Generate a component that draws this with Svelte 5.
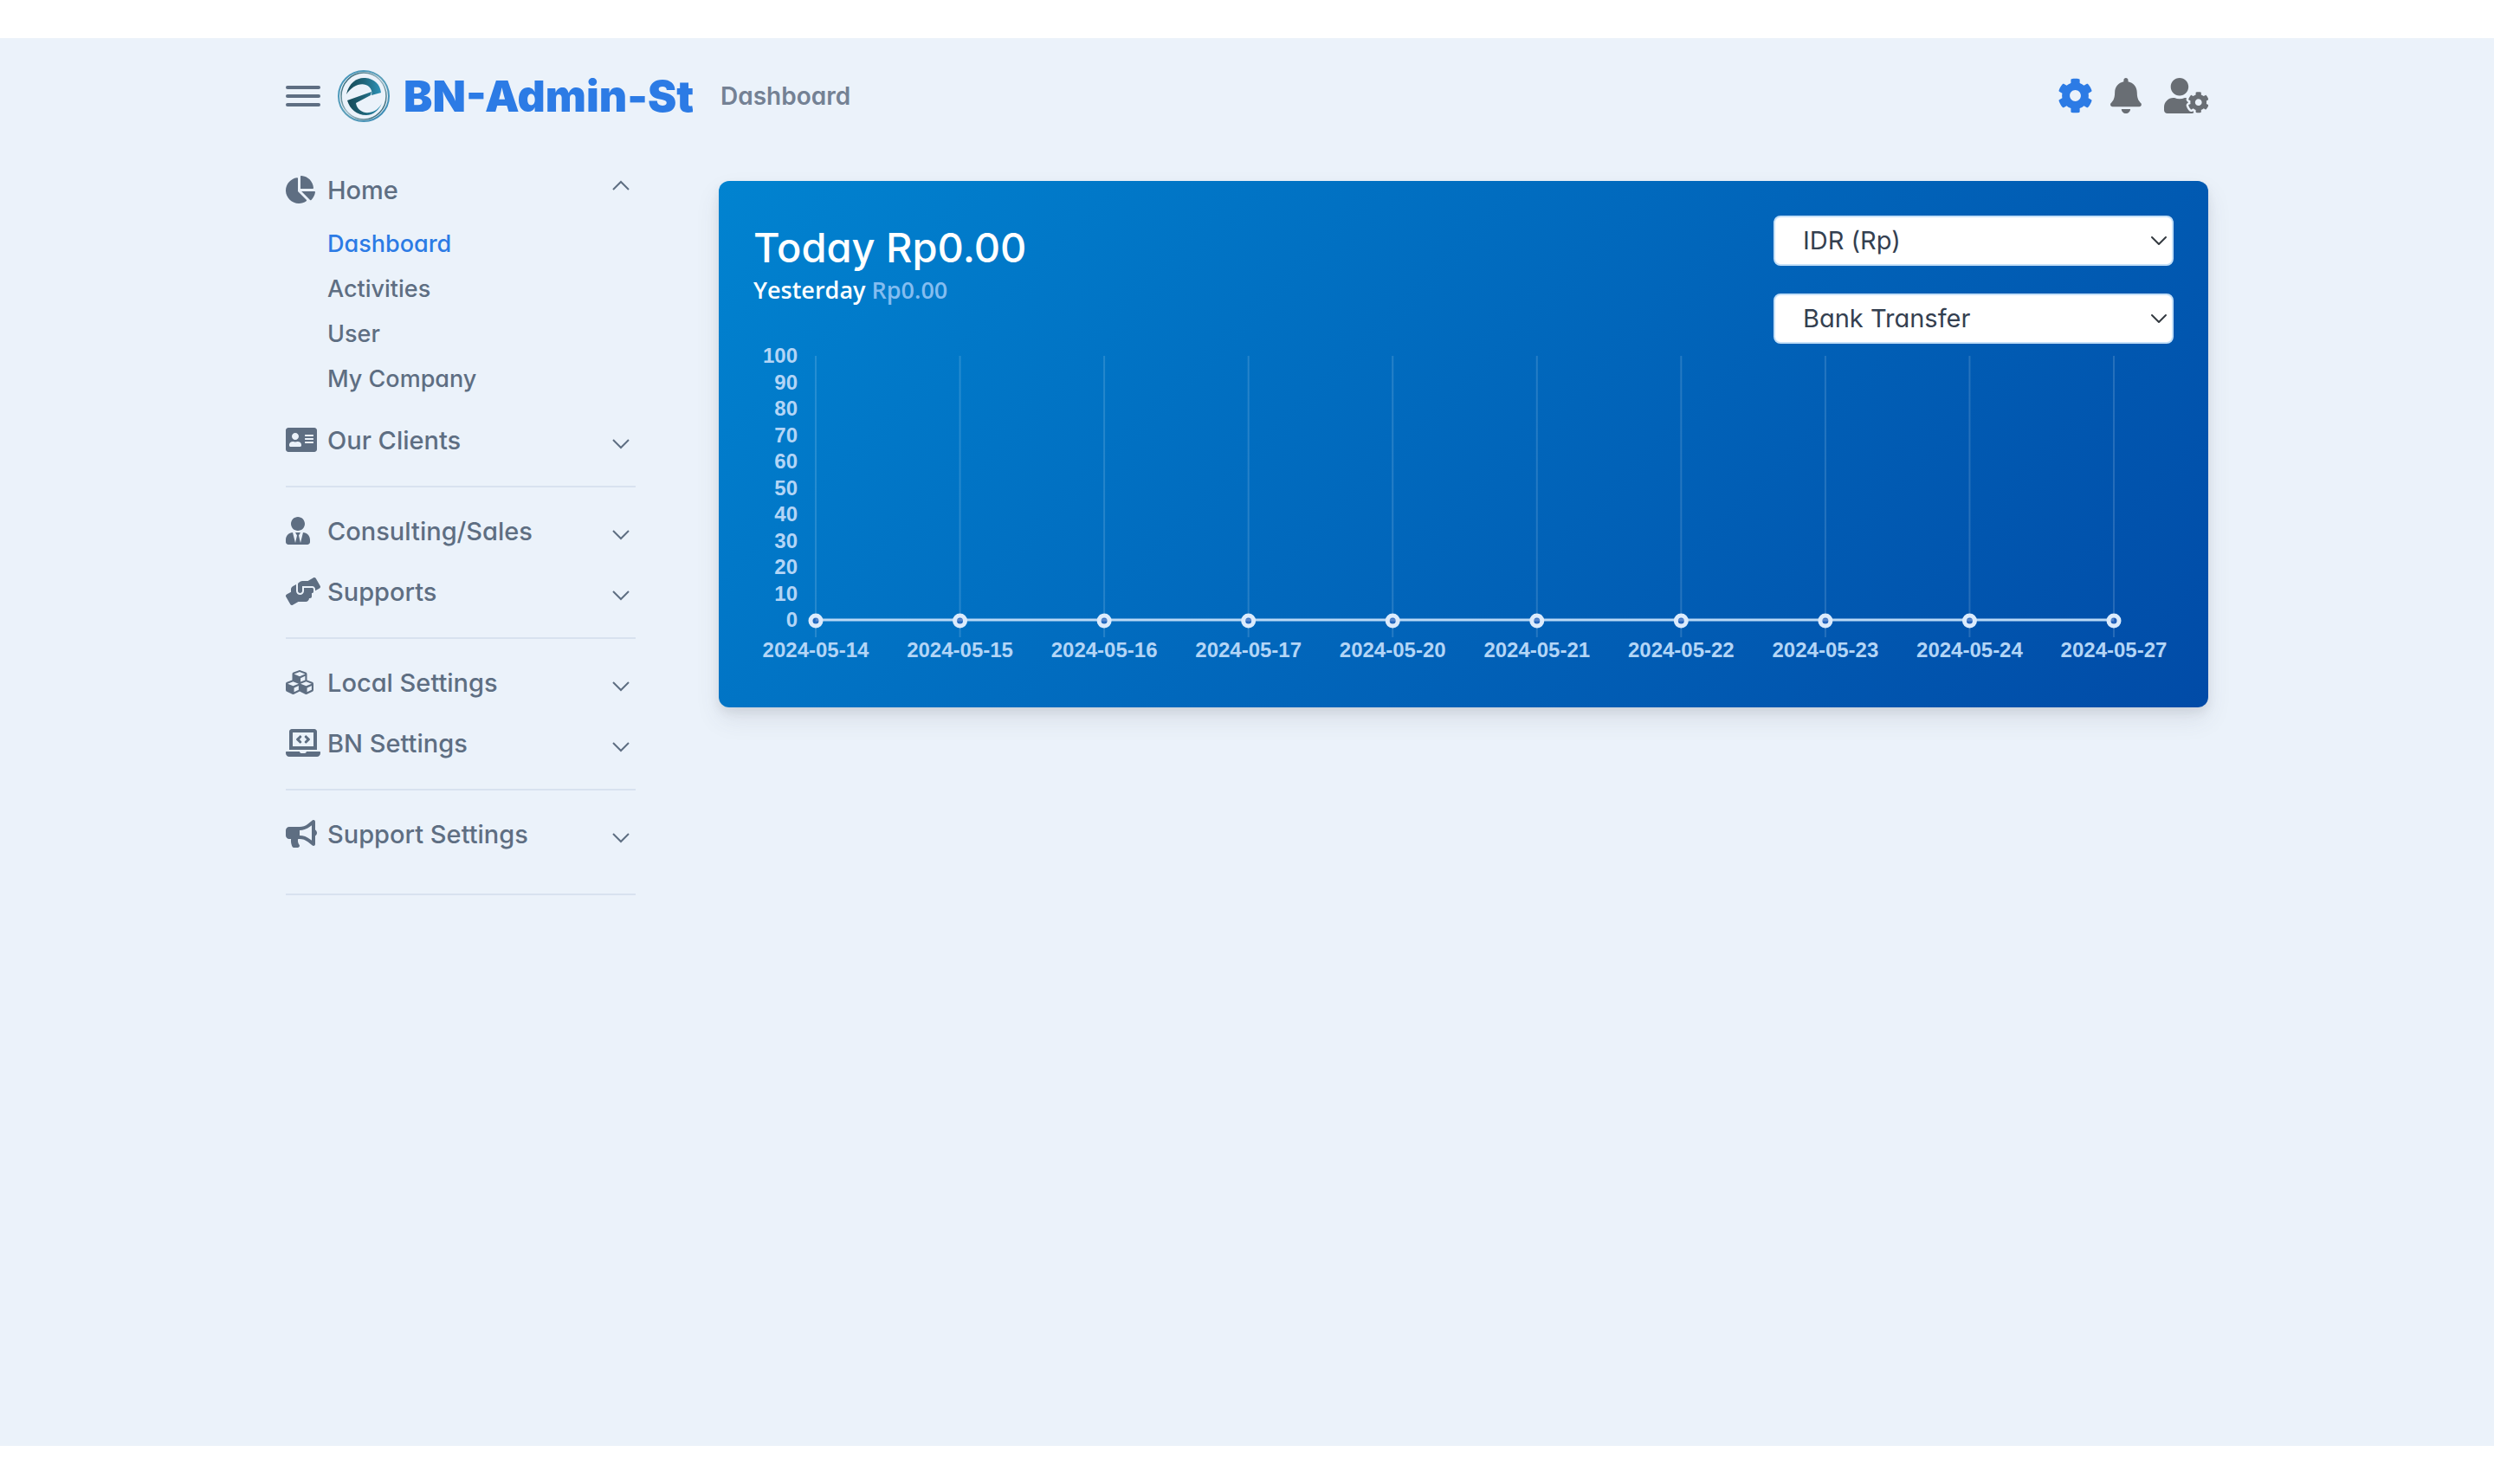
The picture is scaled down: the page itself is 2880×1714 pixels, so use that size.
<script>
  const icons = {
    pie: { w: 544, d: 'M527.79 288H290.5l158.03 158.03c6.04 6.04 15.98 6.53 22.19.68 38.7-36.46 65.32-85.61 73.13-140.86 1.34-9.46-6.51-17.85-16.06-17.85zm-15.83-64.8C503.72 103.74 408.26 8.28 288.8.04 279.68-.59 272 7.1 272 16.24V240h223.77c9.14 0 16.82-7.68 16.19-16.8zM224 288V50.71c0-9.55-8.39-17.4-17.84-16.06C86.99 51.49-4.1 155.6.14 280.37 4.5 408.51 114.83 513.59 243.03 511.98c50.4-.63 96.97-16.87 135.26-44.03 7.9-5.6 8.42-17.23 1.57-24.08L224 288z' },
    card: { w: 576, d: 'M528 32H48C21.5 32 0 53.5 0 80v352c0 26.5 21.5 48 48 48h480c26.5 0 48-21.5 48-48V80c0-26.5-21.5-48-48-48zm-352 96c35.3 0 64 28.7 64 64s-28.7 64-64 64-64-28.7-64-64 28.7-64 64-64zm112 236.8c0 10.6-10 19.2-22.4 19.2H86.4C74 384 64 375.4 64 364.8v-19.2c0-31.8 30.1-57.6 67.2-57.6h5c12.3 5.1 25.7 8 39.8 8s27.6-2.9 39.8-8h5c37.1 0 67.2 25.8 67.2 57.6v19.2zM512 312c0 4.4-3.6 8-8 8H360c-4.4 0-8-3.6-8-8v-16c0-4.4 3.6-8 8-8h144c4.4 0 8 3.6 8 8v16zm0-64c0 4.4-3.6 8-8 8H360c-4.4 0-8-3.6-8-8v-16c0-4.4 3.6-8 8-8h144c4.4 0 8 3.6 8 8v16zm0-64c0 4.4-3.6 8-8 8H360c-4.4 0-8-3.6-8-8v-16c0-4.4 3.6-8 8-8h144c4.4 0 8 3.6 8 8v16z' },
    tie: { w: 448, d: 'M224 256c70.7 0 128-57.3 128-128S294.7 0 224 0 96 57.3 96 128s57.3 128 128 128zm95.8 32.6L272 480l-32-136 32-56h-96l32 56-32 136-47.8-191.4C56.9 292 0 350.3 0 422.4V464c0 26.5 21.5 48 48 48h352c26.5 0 48-21.5 48-48v-41.6c0-72.1-56.9-130.4-128.2-133.8z' },
    hands: { w: 640, d: 'M488 192H336v56c0 39.7-32.3 72-72 72s-72-32.3-72-72V126.4l-64.9 39C107.8 176.9 96 197.8 96 220.2v47.3l-80 46.2C.7 322.5-4.6 342.1 4.3 357.4l80 138.6c8.8 15.3 28.4 20.5 43.7 11.7L231.4 448H368c35.3 0 64-28.7 64-64h16c17.7 0 32-14.3 32-32v-64h8c13.3 0 24-10.7 24-24v-48c0-13.3-10.7-24-24-24zm147.7-37.4L555.7 16C546.9.7 527.3-4.5 512 4.3L408.6 64H306.4c-12 0-23.7 3.4-33.9 9.7L239 94.6c-9.4 5.8-15 16.1-15 27.1V248c0 22.1 17.9 40 40 40s40-17.9 40-40v-88h184c30.9 0 56 25.1 56 56v28.5l80-46.2c15.3-8.9 20.5-28.4 11.7-43.7z' },
    cubes: { w: 512, d: 'M488.6 250.2L392 214V105.5c0-15-9.3-28.4-23.4-33.7l-100-37.5c-8.1-3.1-17.1-3.1-25.3 0l-100 37.5c-14.1 5.3-23.4 18.7-23.4 33.7V214l-96.6 36.2C9.3 255.5 0 268.9 0 283.9V394c0 13.6 7.7 26.1 19.9 32.2l100 50c10.1 5.1 22.1 5.1 32.2 0l103.9-52 103.9 52c10.1 5.1 22.1 5.1 32.2 0l100-50c12.2-6.1 19.9-18.6 19.9-32.2V283.9c0-15-9.3-28.4-23.4-33.7zM358 214.8l-85 31.9v-68.2l85-37v73.3zM154 104.1l102-38.2 102 38.2v.6l-102 41.4-102-41.4v-.6zm84 291.1l-85 42.5v-79.1l85-38.8v75.4zm0-112l-102 41.4-102-41.4v-.6l102-38.2 102 38.2v.6zm240 112l-85 42.5v-79.1l85-38.8v75.4zm0-112l-102 41.4-102-41.4v-.6l102-38.2 102 38.2v.6z' },
    laptop: { w: 640, d: 'M255.03 261.65c6.25 6.25 16.38 6.25 22.63 0l11.31-11.31c6.25-6.25 6.25-16.38 0-22.63L253.25 192l35.71-35.72c6.25-6.25 6.25-16.38 0-22.63l-11.31-11.31c-6.25-6.25-16.38-6.25-22.63 0l-58.34 58.34c-6.25 6.25-6.25 16.38 0 22.63l58.35 58.34zm96.01-11.3l11.31 11.31c6.25 6.25 16.38 6.25 22.63 0l58.34-58.34c6.25-6.25 6.25-16.38 0-22.63l-58.34-58.34c-6.25-6.25-16.38-6.25-22.63 0l-11.31 11.31c-6.25 6.25-6.25 16.38 0 22.63L386.75 192l-35.71 35.72c-6.25 6.25-6.25 16.38 0 22.63zM624 416H381.54c-.74 19.81-14.71 32-32.74 32H288c-18.69 0-33.02-17.47-32.77-32H16c-8.8 0-16 7.2-16 16v16c0 35.2 28.8 64 64 64h512c35.2 0 64-28.8 64-64v-16c0-8.8-7.2-16-16-16zM576 48c0-26.4-21.6-48-48-48H112C85.6 0 64 21.6 64 48v336h512V48zm-64 272H128V64h384v256z' },
    horn: { w: 576, d: 'M576 240c0-23.63-12.95-44.04-32-55.12V32.01C544 23.26 537.02 0 512 0c-7.12 0-14.19 2.38-19.98 7.02l-85.03 68.03C364.28 109.19 310.66 128 256 128H64c-35.35 0-64 28.65-64 64v96c0 35.35 28.65 64 64 64h33.7c-1.39 10.48-2.18 21.14-2.18 32 0 39.77 9.26 77.35 25.56 110.94 5.19 10.69 16.52 17.06 28.4 17.06h74.28c26.05 0 41.69-29.84 25.9-50.56-16.4-21.52-26.15-48.36-26.15-77.44 0-11.11 1.62-21.79 4.41-32H256c54.66 0 108.28 18.81 150.98 52.95l85.03 68.03a32.023 32.023 0 0 0 19.98 7.02c24.92 0 32-22.78 32-32V295.13C563.05 284.04 576 263.63 576 240zm-96 141.42l-33.05-26.44C392.95 311.78 325.12 288 256 288v-96c69.12 0 136.95-23.78 190.95-66.98L480 98.58v282.84z' },
    cog: { w: 512, d: 'M487.4 315.7l-42.6-24.6c4.3-23.2 4.3-47 0-70.2l42.6-24.6c4.9-2.8 7.1-8.6 5.5-14-11.1-35.6-30-67.8-54.7-94.6-3.8-4.1-10-5.1-14.8-2.3L380.8 110c-17.9-15.4-38.5-27.3-60.8-35.1V25.8c0-5.6-3.9-10.5-9.4-11.7-36.7-8.2-74.3-7.8-109.2 0-5.5 1.2-9.4 6.1-9.4 11.7V75c-22.2 7.9-42.8 19.8-60.8 35.1L88.7 85.5c-4.9-2.8-11-1.9-14.8 2.3-24.7 26.7-43.6 58.9-54.7 94.6-1.7 5.4.6 11.2 5.5 14L67.3 221c-4.3 23.2-4.3 47 0 70.2l-42.6 24.6c-4.9 2.8-7.1 8.6-5.5 14 11.1 35.6 30 67.8 54.7 94.6 3.8 4.1 10 5.1 14.8 2.3l42.6-24.6c17.9 15.4 38.5 27.3 60.8 35.1v49.2c0 5.6 3.9 10.5 9.4 11.7 36.7 8.2 74.3 7.8 109.2 0 5.5-1.2 9.4-6.1 9.4-11.7v-49.2c22.2-7.9 42.8-19.8 60.8-35.1l42.6 24.6c4.9 2.8 11 1.9 14.8-2.3 24.7-26.7 43.6-58.9 54.7-94.6 1.5-5.5-.7-11.3-5.6-14.1zM256 336c-44.1 0-80-35.9-80-80s35.9-80 80-80 80 35.9 80 80-35.9 80-80 80z' },
    bell: { w: 448, d: 'M224 512c35.32 0 63.97-28.65 63.97-64H160.03c0 35.35 28.65 64 63.97 64zm215.39-149.71c-19.32-20.76-55.47-51.99-55.47-154.29 0-77.7-54.48-139.9-127.94-155.16V32c0-17.67-14.32-32-31.98-32s-31.98 14.33-31.98 32v20.84C118.56 68.1 64.08 130.3 64.08 208c0 102.3-36.15 133.53-55.47 154.29-6 6.45-8.66 14.16-8.61 21.71.11 16.4 12.98 32 32.1 32h383.8c19.12 0 32-15.6 32.1-32 .05-7.55-2.61-15.27-8.61-21.71z' },
    userCog: { w: 640, d: 'M610.5 373.3c2.6-14.1 2.6-28.5 0-42.6l25.8-14.9c3-1.7 4.3-5.2 3.3-8.5-6.7-21.6-18.2-41.2-33.2-57.4-2.3-2.5-6-3.1-9-1.4l-25.8 14.9c-10.9-9.3-23.4-16.5-36.9-21.3v-29.8c0-3.4-2.4-6.4-5.7-7.1-22.3-5-45-4.8-66.2 0-3.3.7-5.7 3.7-5.7 7.1v29.8c-13.5 4.8-26 12-36.9 21.3l-25.8-14.9c-2.9-1.7-6.7-1.1-9 1.4-15 16.2-26.5 35.8-33.2 57.4-1 3.3.4 6.8 3.3 8.5l25.8 14.9c-2.6 14.1-2.6 28.5 0 42.6l-25.8 14.9c-3 1.7-4.3 5.2-3.3 8.5 6.7 21.6 18.2 41.1 33.2 57.4 2.3 2.5 6 3.1 9 1.4l25.8-14.9c10.9 9.3 23.4 16.5 36.9 21.3v29.8c0 3.4 2.4 6.4 5.7 7.1 22.3 5 45 4.8 66.2 0 3.3-.7 5.7-3.7 5.7-7.1v-29.8c13.5-4.8 26-12 36.9-21.3l25.8 14.9c2.9 1.7 6.7 1.1 9-1.4 15-16.2 26.5-35.8 33.2-57.4 1-3.3-.4-6.8-3.3-8.5l-25.8-14.9zM496 400.5c-26.8 0-48.5-21.8-48.5-48.5s21.8-48.5 48.5-48.5 48.5 21.8 48.5 48.5-21.7 48.5-48.5 48.5zM224 256c70.7 0 128-57.3 128-128S294.7 0 224 0 96 57.3 96 128s57.3 128 128 128zm201.2 226.5c-2.3-1.2-4.6-2.6-6.8-3.9l-7.9 4.6c-6 3.4-12.8 5.3-19.6 5.3-10.9 0-21.4-4.6-28.9-12.6-18.3-19.8-32.3-43.9-40.2-69.6-5.5-17.7 1.9-36.4 17.9-45.7l7.9-4.6c-.1-2.6-.1-5.2 0-7.8l-7.9-4.6c-16-9.2-23.4-28-17.9-45.7.9-2.9 2.2-5.8 3.2-8.7-3.8-.3-7.5-1.2-11.4-1.2h-16.7c-22.2 10.2-46.9 16-72.9 16s-50.6-5.8-72.9-16h-16.7C60.2 288 0 348.2 0 422.4V464c0 26.5 21.5 48 48 48h352c10.1 0 19.5-3.2 27.2-8.5-1.2-3.8-2-7.7-2-11.8v-9.2z' }
  };

  let groups = $state([
    [
      { label: 'Home', icon: 'pie', open: true, children: ['Dashboard', 'Activities', 'User', 'My Company'] },
      { label: 'Our Clients', icon: 'card' }
    ],
    [
      { label: 'Consulting/Sales', icon: 'tie' },
      { label: 'Supports', icon: 'hands' }
    ],
    [
      { label: 'Local Settings', icon: 'cubes' },
      { label: 'BN Settings', icon: 'laptop' }
    ],
    [{ label: 'Support Settings', icon: 'horn' }]
  ]);

  const filters = [
    { id: 'currency', name: 'Currency', options: ['IDR (Rp)', 'USD ($)'] },
    { id: 'method', name: 'Payment method', options: ['Bank Transfer', 'Credit Card'] }
  ];

  const dates = ['14', '15', '16', '17', '20', '21', '22', '23', '24', '27'];
  const points = dates.map((d, i) => ({ label: `2024-05-${d}`, x: 72 + (i * 1499) / 9 }));
  const ticks = Array.from({ length: 11 }, (_, i) => ({ value: 100 - i * 10, y: 14 + (i * 305) / 10 }));
</script>

{#snippet icon(name)}
  <svg class="icon" viewBox="0 0 {icons[name].w} 512" aria-hidden="true"><path d={icons[name].d} /></svg>
{/snippet}

<div class="page">
  <div class="container">
    <header>
      <div class="brand-area">
        <button class="burger" aria-label="Toggle navigation"><span></span><span></span><span></span></button>
        <a class="brand" href="#home">
          <svg class="logo" viewBox="0 0 60 60" aria-hidden="true">
            <defs>
              <linearGradient id="ring" x1="0" y1="0" x2="1" y2="1">
                <stop offset="0" stop-color="#3f93bb" />
                <stop offset="0.5" stop-color="#5c9fb8" />
                <stop offset="1" stop-color="#3387b5" />
              </linearGradient>
              <linearGradient id="ring-inner" x1="0" y1="0" x2="1" y2="1">
                <stop offset="0" stop-color="#17505f" />
                <stop offset="0.5" stop-color="#9db9c4" />
                <stop offset="1" stop-color="#17505f" />
              </linearGradient>
              <linearGradient id="swirl" x1="0" y1="0" x2="1" y2="0">
                <stop offset="0" stop-color="#174a58" />
                <stop offset="0.5" stop-color="#1f6478" />
                <stop offset="1" stop-color="#2d93b8" />
              </linearGradient>
            </defs>
            <circle cx="30" cy="30" r="29" fill="none" stroke="url(#ring)" stroke-width="2" />
            <ellipse cx="30" cy="30" rx="26" ry="27" fill="none" stroke="url(#ring-inner)" stroke-width="1.5" />
            <path d="M10 28C13 14 23 8 32 9c10 1 17 7 18 17l-11 3c1-4 0-7-3-10-7-6-19-2-26 9z" fill="url(#swirl)" />
            <path d="M11 35l28-10-1 4-17 9c1 8 9 12 15 11 7-1 12-5 15-11-3 8-10 14-18 14-11 0-19-7-22-17z" fill="url(#swirl)" />
          </svg>
          <span>BN-Admin-St</span>
        </a>
      </div>
      <h1>Dashboard</h1>
      <div class="actions">
        <button class="active" aria-label="Settings">{@render icon('cog')}</button>
        <button aria-label="Notifications">{@render icon('bell')}</button>
        <button aria-label="Account">{@render icon('userCog')}</button>
      </div>
    </header>

    <div class="body">
      <nav aria-label="Main">
        {#each groups as group}
          <ul class="group">
            {#each group as item}
              <li>
                <button class="row" aria-expanded={!!item.open} onclick={() => (item.open = !item.open)}>
                  <span class="slot">{@render icon(item.icon)}</span>
                  <span class="label">{item.label}</span>
                  <svg class="chevron" class:up={item.open} viewBox="0 0 20 28" aria-hidden="true"><path d="M1 14l9 9 9-9" /></svg>
                </button>
                {#if item.open && item.children}
                  <ul class="sub">
                    {#each item.children as child, i}
                      <li><a href="#{child}" class:current={i === 0}>{child}</a></li>
                    {/each}
                  </ul>
                {/if}
              </li>
            {/each}
          </ul>
        {/each}
      </nav>

      <main>
        <section class="card">
          <div class="head">
            <div>
              <h2>Today Rp0.00</h2>
              <p>Yesterday <span>Rp0.00</span></p>
            </div>
            <div class="filters">
              {#each filters as f}
                <div class="select">
                  <select id={f.id} aria-label={f.name}>
                    {#each f.options as o}<option>{o}</option>{/each}
                  </select>
                  <svg viewBox="0 0 20 20" aria-hidden="true"><path d="M2 6l8 8 8-8" /></svg>
                </div>
              {/each}
            </div>
          </div>
          <svg class="chart" viewBox="0 0 1640 380" role="img" aria-label="Payments per day">
            {#each ticks as t}
              <text class="y" x="51" y={t.y + 8}>{t.value}</text>
            {/each}
            {#each points as p}
              <line class="grid" x1={p.x} x2={p.x} y1="14" y2="339" />
            {/each}
            <line class="series" x1={points[0].x} x2={points[9].x} y1="319" y2="319" />
            {#each points as p}
              <circle class="dot" cx={p.x} cy="320" r="6" />
              <text class="x" x={p.x} y="362">{p.label}</text>
            {/each}
          </svg>
        </section>
      </main>
    </div>
  </div>
</div>

<style>
  :global(body) {
    background: #fff;
  }
  .page {
    box-sizing: border-box;
    margin: 44px 0;
    min-height: calc(100vh - 88px);
    padding: 0 40px;
    background: #ebf2fa;
    color: #5e6e82;
    font-family: Inter, 'Open Sans', sans-serif;
    font-feature-settings: 'cv11';
    font-weight: 500;
    display: flow-root;
  }
  .container {
    max-width: 2220px;
    margin: 0 auto;
  }
  button {
    border: 0;
    padding: 0;
    background: none;
    color: inherit;
    font: inherit;
    font-feature-settings: inherit;
    cursor: pointer;
  }
  a {
    color: inherit;
    text-decoration: none;
  }
  ul {
    list-style: none;
    margin: 0;
    padding: 0;
  }
  .icon {
    display: block;
    height: 32px;
    fill: currentColor;
  }

  header {
    display: flex;
    align-items: center;
    height: 134px;
  }
  .brand-area {
    display: flex;
    align-items: center;
    flex: 0 0 470px;
    gap: 20px;
    margin-right: 32px;
    overflow: hidden;
  }
  .burger {
    display: flex;
    flex: none;
    flex-direction: column;
    gap: 6px;
    width: 40px;
  }
  .burger span {
    height: 4px;
    border-radius: 2px;
    background: #5e6e82;
  }
  .brand {
    display: flex;
    align-items: center;
    gap: 16px;
    color: #2c7be5;
    font-size: 50px;
    font-weight: 900;
    line-height: 64px;
    white-space: nowrap;
  }
  .logo {
    flex: none;
    width: 60px;
    height: 60px;
  }
  h1 {
    flex: 1;
    margin: 0;
    color: #748194;
    font-size: 28px;
    font-weight: 600;
    line-height: 40px;
  }
  .actions {
    display: flex;
    align-items: center;
    gap: 20px;
    padding-bottom: 2px;
    color: #696e74;
  }
  .actions .icon {
    height: 41px;
  }
  .actions button:last-child {
    margin-left: 6px;
  }
  .actions .active {
    color: #2c7be5;
  }

  .body {
    display: grid;
    grid-template-columns: 404px minmax(0, 1fr);
    gap: 96px;
  }
  nav {
    padding-top: 6px;
  }
  .group {
    padding-bottom: 18px;
    border-bottom: 2px solid #d8e2ef;
    margin-bottom: 15px;
  }
  .group:last-child {
    padding-bottom: 34px;
  }
  .row {
    display: flex;
    align-items: center;
    width: 100%;
    height: 70px;
    padding-right: 7px;
    font-size: 29px;
    text-align: left;
  }
  .slot {
    width: 48px;
  }
  .label {
    flex: 1;
  }
  .chevron {
    width: 20px;
    height: 28px;
    fill: none;
    stroke: currentColor;
    stroke-width: 2;
  }
  .chevron.up {
    transform: rotate(180deg);
  }
  .sub {
    padding: 2px 0 9px 48px;
  }
  .sub a {
    display: block;
    font-size: 27px;
    line-height: 52px;
  }
  .sub .current {
    color: #2c7be5;
  }

  main {
    padding-top: 31px;
  }
  .card {
    padding: 40px;
    border-radius: 12px;
    background: linear-gradient(-45deg, #014ba7, #0183d0);
    box-shadow: 0 14px 28px rgba(65, 69, 88, 0.1), 0 6px 12px rgba(0, 0, 0, 0.07);
    color: #fff;
  }
  .head {
    display: flex;
    justify-content: space-between;
    gap: 40px;
  }
  h2 {
    margin: 7px 0 1px;
    font-size: 47px;
    font-weight: 500;
    line-height: 60px;
  }
  p {
    margin: 0;
    font: 600 27px/36px 'Open Sans', sans-serif;
  }
  p span {
    color: #84bdf0;
  }
  .filters {
    display: grid;
    gap: 32px;
    flex: 0 1 462px;
  }
  .select {
    display: grid;
    align-items: center;
  }
  .select > * {
    grid-area: 1 / 1;
  }
  select {
    appearance: none;
    width: 100%;
    height: 58px;
    padding: 0 48px 0 32px;
    border: 2px solid #c5e0f8;
    border-radius: 8px;
    background: #fff;
    color: #344050;
    font: 400 29px/40px Inter, sans-serif;
    font-feature-settings: inherit;
  }
  .select svg {
    justify-self: end;
    width: 20px;
    margin-right: 7px;
    fill: none;
    stroke: #343a40;
    stroke-width: 2;
    stroke-linecap: round;
    stroke-linejoin: round;
    pointer-events: none;
  }
  .chart {
    display: block;
    width: 100%;
    font: 700 24px 'Liberation Sans', Arial, sans-serif;
  }
  .chart text {
    fill: #b3d5f6;
  }
  .y {
    text-anchor: end;
  }
  .x {
    text-anchor: middle;
  }
  .grid {
    stroke: rgba(255, 255, 255, 0.15);
    stroke-width: 2;
  }
  .series {
    stroke: #b9d8f5;
    stroke-width: 3;
  }
  .dot {
    fill: rgba(44, 100, 190, 0.7);
    stroke: #dcebfc;
    stroke-width: 5;
  }
</style>
